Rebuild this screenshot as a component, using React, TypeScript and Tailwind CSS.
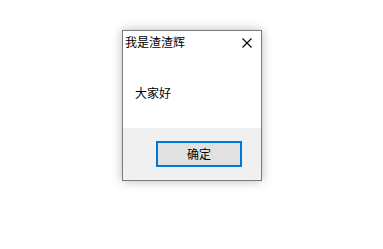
import React from "react";

export default function App() {
  const font = { fontFamily: '"Noto Sans CJK SC", "Noto Sans", sans-serif' };
  return (
    <div className="w-[383px] h-[249px] bg-white pt-[30px] pl-[122px]" style={font}>
      <div className="w-[140px] h-[151px] border border-[#7a7a7a] bg-white flex flex-col shadow-[0_0_10px_rgba(0,0,0,0.28)]">
        <div className="h-[30px] flex items-start justify-between pl-[2px] pr-[9px]">
          <span className="text-[12px] leading-[12px] mt-[5px] text-black">我是渣渣辉</span>
          <svg width="10" height="10" viewBox="0 0 10 10" className="mt-[7px]">
            <path d="M0.5 0.5 L9.5 9.5 M9.5 0.5 L0.5 9.5" stroke="#000" strokeWidth="1.1" />
          </svg>
        </div>
        <div className="flex-1 pl-[12px] pt-[26px]">
          <span className="block text-[12px] leading-[12px] text-black">大家好</span>
        </div>
        <div className="h-[52px] bg-[#f0f0f0] flex justify-end items-start pr-[19px] pt-[13px]">
          <div className="w-[86px] h-[26px] border-2 border-[#0078d7] bg-[#e1e1e1] flex items-center justify-center text-[12px] leading-[12px] text-black">
            确定
          </div>
        </div>
      </div>
    </div>
  );
}
